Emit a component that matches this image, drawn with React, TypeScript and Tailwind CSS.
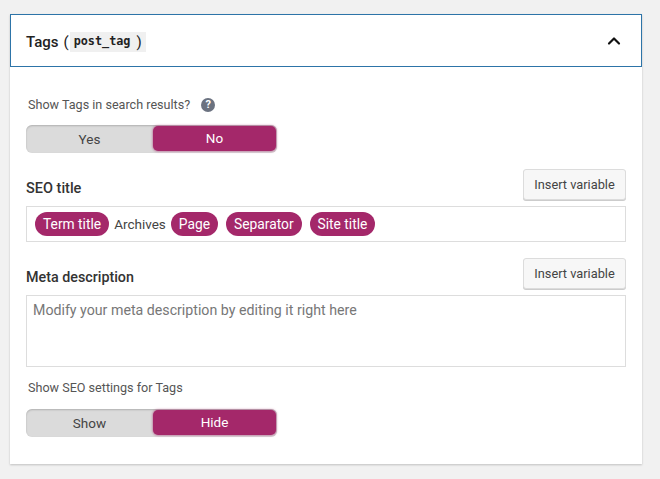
import { ChevronUp } from 'lucide-react'

const font = "[font-family:'Roboto','Noto_Sans',sans-serif]"

function Toggle({ off, on }: { off: string; on: string }) {
  return (
    <div className="flex h-[28px] w-[251px] rounded-[6px] bg-[#dbdbdb] shadow-[inset_0_1px_2px_rgba(0,0,0,0.2)]">
      <div className="flex w-[127px] items-center justify-center text-[13.5px] text-[#444]">{off}</div>
      <div className="mt-px flex h-[25px] w-[123px] items-center justify-center rounded-[5px] bg-[#a4286a] text-[13.5px] text-white shadow-[0_0_2px_1px_rgba(164,40,106,0.4)]">
        {on}
      </div>
    </div>
  )
}

function InsertButton() {
  return (
    <button className="flex h-[31px] w-[103px] items-center justify-center rounded-[3px] border border-[#dcdcdc] bg-[#f7f7f7] text-[12.8px] text-[#444] shadow-[0_1px_0_#ccc]">
      Insert variable
    </button>
  )
}

function Pill({ label }: { label: string }) {
  return (
    <span className="flex h-[24px] items-center rounded-full bg-[#a4286a] px-[8px] text-[13.8px] text-white">
      {label}
    </span>
  )
}

export default function App() {
  return (
    <div className={`h-[479px] w-[660px] overflow-hidden bg-[#f1f1f1] px-[10px] pt-[14px] text-[#444] ${font}`}>
      <div className="h-[450px] w-[632px] bg-white shadow-[0_1px_2px_rgba(0,0,0,0.2)]">
        <div className="flex h-[53px] items-center justify-between border border-[#2d74a8] pl-[15px] pr-[17px]">
          <div className="flex items-center pt-[3px] text-[15px] font-medium text-[#222]">
            Tags
            <span className="ml-[5px] font-normal">(</span>
            <code className="ml-[1px] flex h-[20px] items-center bg-[#f0f0f0] pl-[4px] pr-[4px] font-['DejaVu_Sans_Mono',monospace] text-[11.8px] font-bold">
              post_tag
              <span className="ml-[6px] font-['Roboto',sans-serif] text-[15px] font-normal">)</span>
            </code>
          </div>
          <ChevronUp className="h-[20px] w-[20px] text-[#111]" strokeWidth={2.6} />
        </div>

        <div className="px-[16px]">
          <div className="mt-[29px] flex h-[18px] items-center text-[12.6px] text-[#555]">
            <span className="ml-[2px]">Show Tags in search results?</span>
            <span className="ml-[11px] flex h-[14px] w-[14px] items-center justify-center rounded-full bg-[#6b7280] text-[11px] font-bold text-white">
              ?
            </span>
          </div>
          <div className="mt-[11px]">
            <Toggle off="Yes" on="No" />
          </div>

          <div className="mt-[16px] flex h-[31px] items-end justify-between">
            <span className="text-[14.5px] font-medium text-[#333]">SEO title</span>
            <InsertButton />
          </div>
          <div className="mt-[6px] flex h-[36px] items-center border border-[#ddd] pl-[8px]">
            <Pill label="Term title" />
            <span className="mx-[5px] text-[13.5px] text-[#444]">Archives</span>
            <Pill label="Page" />
            <span className="ml-[8px]">
              <Pill label="Separator" />
            </span>
            <span className="ml-[8px]">
              <Pill label="Site title" />
            </span>
          </div>

          <div className="mt-[16px] flex h-[31px] items-end justify-between">
            <span className="mb-[1px] text-[14.3px] font-medium text-[#333]">Meta description</span>
            <InsertButton />
          </div>
          <div className="mt-[6px] h-[72px] border border-[#ddd] px-[6px] py-[4px] text-[14.2px] text-[#777]">
            Modify your meta description by editing it right here
          </div>

          <div className="mt-[12px] ml-[2px] flex h-[18px] items-center text-[12.6px] text-[#555]">
            Show SEO settings for Tags
          </div>
          <div className="mt-[12px]">
            <Toggle off="Show" on="Hide" />
          </div>
        </div>
      </div>
    </div>
  )
}
